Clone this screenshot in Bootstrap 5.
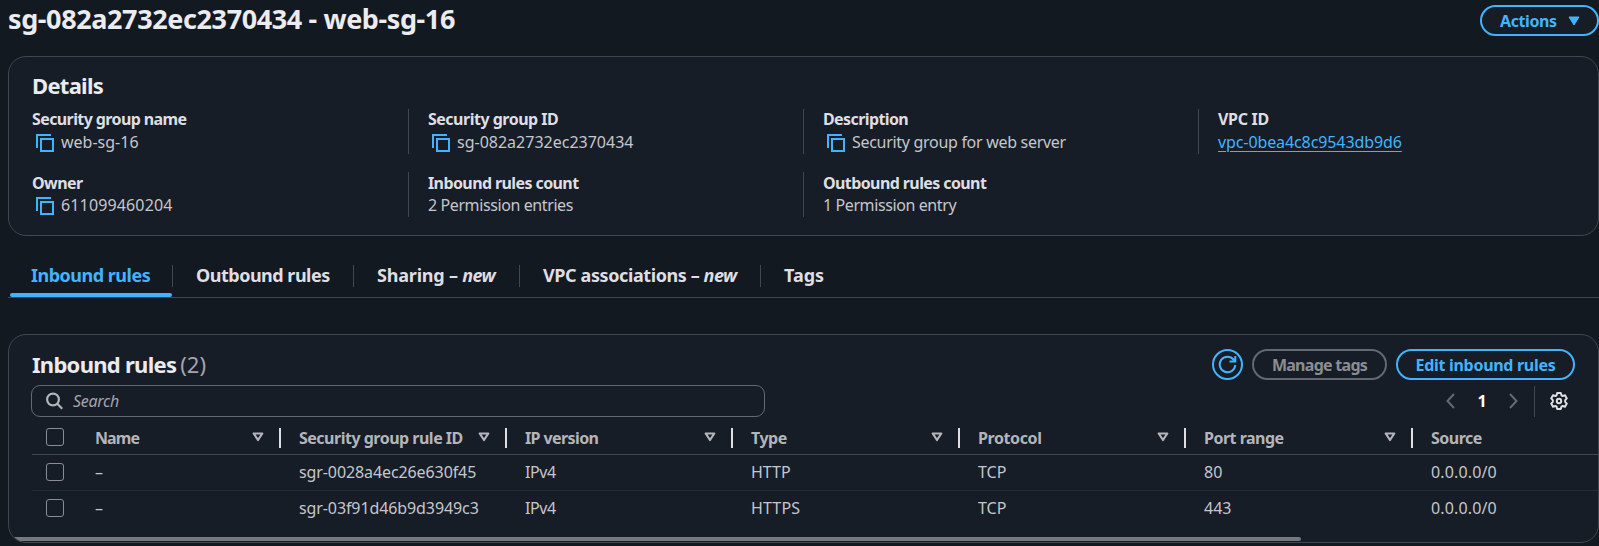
<!DOCTYPE html>
<html lang="en" data-bs-theme="dark">
<head>
<meta charset="utf-8">
<meta name="viewport" content="width=device-width, initial-scale=1">
<title>sg-082a2732ec2370434 - web-sg-16</title>
<link href="https://cdn.jsdelivr.net/npm/bootstrap@5.3.0/dist/css/bootstrap.min.css" rel="stylesheet">
<style>
  :root { --accent: #42b4ff; --edge: #424650; --panel: #161d26; }
  body { background: #131920; color: #c6c6cd; font: 400 16px/20px "Noto Sans", sans-serif; height: 546px; overflow: hidden; }
  svg { display: block; flex: none; }
  .t1 { letter-spacing: -.1px; } .t2 { letter-spacing: -.2px; } .t3 { letter-spacing: -.3px; }
  .t4 { letter-spacing: -.4px; } .t5 { letter-spacing: -.5px; } .t6 { letter-spacing: -.6px; }
  .t7 { letter-spacing: -.72px; } .t9 { letter-spacing: -.9px; } .w1 { letter-spacing: .14px; }
  .page-head { height: 56px; padding-left: 8px; }
  .page-head h1 { font-size: 27px; line-height: 38px; font-weight: 700; letter-spacing: -.39px; color: #ebebf0; }
  .pill { height: 31px; border: 2px solid var(--accent); border-radius: 16px; color: var(--accent); background: var(--panel); font: 700 16px/26px "Noto Sans", sans-serif; padding: 0; }
  .pill.dim { border-color: #656871; color: #8c8c94; }
  .pill.menu { width: 119px; margin-top: 5px; padding: 0 17px 0 18px; }
  .pill.round { width: 31px; }
  .panel { background: var(--panel); border: 1px solid var(--edge); border-radius: 18px; margin-left: 8px; }
  .panel h2 { font-size: 22px; line-height: 26px; font-weight: 700; color: #ebebf0; }
  .details { height: 180px; padding: 15px 0 0 23px; }
  .kv-grid { display: grid; grid-template-columns: 396px 395px 395px 1fr; grid-template-rows: 45px 45px; row-gap: 18px; margin-top: 11px; }
  .kv { position: relative; }
  .kv.line::before { content: ""; position: absolute; left: -20px; top: 0; bottom: 0; width: 1px; background: var(--edge); }
  .kv dt { font-weight: 700; color: #dedee3; line-height: 20px; height: 23px; }
  .kv dd { height: 22px; line-height: 20px; margin: 0; display: flex; }
  .kv.low dt { padding-top: 1px; }
  .kv dd svg { margin: 2px 7px 0 4px; }
  .kv a { color: var(--accent); text-decoration: underline; text-underline-offset: 3px; text-decoration-thickness: 1px; }
  .tabs { margin-left: 8px; height: 43px; margin-top: 19px; border-bottom: 1px solid var(--edge); padding-left: 2px; }
  .tabs .nav-link { height: 42px; padding: 8px 0 0 23px; position: relative; font: 700 18px/24px "Noto Sans", sans-serif; color: #dedee3; white-space: nowrap; }
  .tabs .nav-link:not(.last)::after { content: ""; position: absolute; right: 0; top: 10px; width: 1px; height: 22px; background: var(--edge); }
  .tabs .nav-link.active { color: var(--accent); padding-left: 21px; }
  .tabs .nav-link.active::before { content: ""; position: absolute; left: 0; right: 1px; bottom: 0; height: 4px; border-radius: 2px; background: var(--accent); }
  .rules { height: 209px; margin-top: 36px; overflow: hidden; position: relative; }
  .rules-head { height: 50px; padding: 14px 23px 0 23px; }
  .count { font-weight: 400; color: #a4a4ad; letter-spacing: 0; margin-left: -1px; }
  .searchbox { width: 734px; height: 32px; border: 1px solid #656871; border-radius: 9px; padding-left: 14px; margin-left: 22px; color: #a4a4ad; font-style: italic; }
  .tools { height: 32px; color: #656871; padding-right: 30px; }
  .tools b { width: 54px; }
  .tools i { width: 1px; height: 31px; margin: 0 15px 0 16px; background: var(--edge); }
  .rules-table { table-layout: fixed; width: 1640px; margin: 5px 0 0 23px; border-collapse: separate; border-spacing: 0; }
  .rules-table th { height: 33px; padding: 0; border-bottom: 1px solid var(--edge); color: #b4b4bb; font-weight: 700; vertical-align: top; }
  .rules-table td { height: 36px; padding: 0 0 2px 18px; border-bottom: 1px solid #232b37; vertical-align: middle; }
  .rules-table tr:last-child td { border-bottom: 0; height: 34px; padding-bottom: 1px; }
  .th-row { height: 20px; margin-top: 6px; padding-left: 18px; line-height: 21px; white-space: nowrap; }
  .sep { width: 2px; height: 20px; background: #dedee3; margin-left: 15px; }
  .box { width: 18px; height: 18px; border: 1px solid #8c8c94; border-radius: 3px; flex: none; }
  .rules-table td.pick, .rules-table th .box { padding-left: 14px; }
  .rules-table th .box { padding: 0; margin-left: 14px; }
  .scroll-thumb { position: absolute; left: 0; bottom: 1px; width: 1292px; height: 4px; background: #75787c; border-radius: 0 2px 2px 0; }
</style>
</head>
<body>
<svg width="0" height="0" class="position-absolute">
  <symbol id="copy" viewBox="0 0 18 18"><path d="M1 14V1h14M6 5h11v12H5V5z" fill="none" stroke="#42b4ff" stroke-width="2"/></symbol>
  <symbol id="sort" viewBox="0 0 12 10"><path d="M1.700 1.500h8.600L6 8z" fill="none" stroke="#b4b4bb" stroke-width="2.200" stroke-linejoin="round"/></symbol>
</svg>

<header class="page-head d-flex justify-content-between">
  <h1 class="m-0">sg-082a2732ec2370434 - web-sg-16</h1>
  <button class="btn pill menu d-flex align-items-center justify-content-between t4"><span>Actions</span><svg width="12" height="10" viewBox="0 0 12 10"><path d="M1 1h10L6 9z" fill="#42b4ff" stroke="#42b4ff" stroke-linejoin="round"/></svg></button>
</header>

<section class="panel details">
  <h2 class="m-0 t7">Details</h2>
  <dl class="kv-grid mb-0">
    <div class="kv"><dt class="t6">Security group name</dt><dd><svg width="18" height="18"><use href="#copy"/></svg>web-sg-16</dd></div>
    <div class="kv line"><dt class="t5">Security group ID</dt><dd><svg width="18" height="18"><use href="#copy"/></svg>sg-082a2732ec2370434</dd></div>
    <div class="kv line"><dt class="t6">Description</dt><dd class="t3"><svg width="18" height="18"><use href="#copy"/></svg>Security group for web server</dd></div>
    <div class="kv line"><dt class="t3">VPC ID</dt><dd class="t1"><a href="#">vpc-0bea4c8c9543db9d6</a></dd></div>
    <div class="kv low"><dt class="t6">Owner</dt><dd class="w1"><svg width="18" height="18"><use href="#copy"/></svg>611099460204</dd></div>
    <div class="kv low line"><dt class="t6">Inbound rules count</dt><dd class="t4">2 Permission entries</dd></div>
    <div class="kv low line"><dt class="t6">Outbound rules count</dt><dd class="t4">1 Permission entry</dd></div>
  </dl>
</section>

<nav class="nav tabs flex-nowrap">
  <a class="nav-link active t5" style="width:163px" href="#">Inbound rules</a>
  <a class="nav-link t5" style="width:181px" href="#">Outbound rules</a>
  <a class="nav-link t2" style="width:166px" href="#">Sharing – <em class="t6">new</em></a>
  <a class="nav-link t4" style="width:241px" href="#">VPC associations – <em class="t6">new</em></a>
  <a class="nav-link last" href="#">Tags</a>
</nav>

<section class="panel rules">
  <div class="rules-head d-flex align-items-start">
    <h2 class="mb-0 mt-0 pt-0 me-auto t7"><span class="d-block pt-0" style="margin-top:2px">Inbound rules <span class="count">(2)</span></span></h2>
    <button class="btn pill round d-flex align-items-center justify-content-center" style="margin-right:9px" aria-label="Refresh"><svg width="19" height="19" viewBox="0 0 19 19"><path d="M17.300 10.200A7.800 7.800 0 1 1 15.600 4.600L17 6.100M17.300 1v5.600h-5.800" fill="none" stroke="#42b4ff" stroke-width="2"/></svg></button>
    <button class="btn pill dim t7" style="width:135px;margin-right:9px">Manage tags</button>
    <button class="btn pill t3" style="width:179px">Edit inbound rules</button>
  </div>
  <div class="d-flex justify-content-between">
    <div class="searchbox d-flex align-items-center"><svg width="18" height="18" viewBox="0 0 18 18" style="margin-right:9px"><circle cx="7" cy="7.500" r="5.900" fill="none" stroke="#b4b4bb" stroke-width="2.200"/><path d="M11.300 11.800l4.900 4.900" stroke="#b4b4bb" stroke-width="2.200"/></svg><span class="t3 lh-1">Search</span></div>
    <div class="tools d-flex align-items-center">
      <svg width="9" height="16" viewBox="0 0 9 16"><path d="M8 1L1.500 8 8 15" fill="none" stroke="#656871" stroke-width="2"/></svg>
      <b class="text-white text-center">1</b>
      <svg width="9" height="16" viewBox="0 0 9 16"><path d="M1 1l6.500 7L1 15" fill="none" stroke="#656871" stroke-width="2"/></svg>
      <i></i>
      <svg width="18" height="18" viewBox="0 0 18 18" fill="none" stroke="#dedee3" stroke-width="2" stroke-linejoin="round"><path d="M7.200 1h3.600l.6 2.300 1.300.7 2.300-.7 1.800 3.100-1.600 1.700v1.800l1.600 1.700-1.800 3.100-2.300-.7-1.300.7-.6 2.300H7.200l-.6-2.300-1.300-.7-2.300.7-1.800-3.100 1.600-1.700V8.100L1.200 6.400 3 3.300l2.300.7 1.300-.7z"/><circle cx="9" cy="9" r="2.200"/></svg>
    </div>
  </div>
  <table class="rules-table">
    <colgroup><col style="width:45px"><col style="width:204px"><col style="width:226px"><col style="width:226px"><col style="width:227px"><col style="width:226px"><col style="width:227px"><col></colgroup>
    <thead><tr>
      <th><div class="th-row d-flex justify-content-between ps-0"><span class="box"></span><span class="sep" style="background:#424650"></span></div></th>
      <th><div class="th-row d-flex"><span class="me-auto t9">Name</span><svg class="mt-1" width="12" height="10"><use href="#sort"/></svg><span class="sep"></span></div></th>
      <th><div class="th-row d-flex"><span class="me-auto t5">Security group rule ID</span><svg class="mt-1" width="12" height="10"><use href="#sort"/></svg><span class="sep"></span></div></th>
      <th><div class="th-row d-flex"><span class="me-auto t6">IP version</span><svg class="mt-1" width="12" height="10"><use href="#sort"/></svg><span class="sep"></span></div></th>
      <th><div class="th-row d-flex"><span class="me-auto t5">Type</span><svg class="mt-1" width="12" height="10"><use href="#sort"/></svg><span class="sep"></span></div></th>
      <th><div class="th-row d-flex"><span class="me-auto t4">Protocol</span><svg class="mt-1" width="12" height="10"><use href="#sort"/></svg><span class="sep"></span></div></th>
      <th><div class="th-row d-flex"><span class="me-auto t5">Port range</span><svg class="mt-1" width="12" height="10"><use href="#sort"/></svg><span class="sep"></span></div></th>
      <th><div class="th-row d-flex"><span class="t5">Source</span></div></th>
    </tr></thead>
    <tbody>
      <tr><td class="pick"><div class="box"></div></td><td>–</td><td class="t1">sgr-0028a4ec26e630f45</td><td class="t4">IPv4</td><td>HTTP</td><td>TCP</td><td>80</td><td class="w1">0.0.0.0/0</td></tr>
      <tr><td class="pick"><div class="box"></div></td><td>–</td><td class="t1">sgr-03f91d46b9d3949c3</td><td class="t4">IPv4</td><td class="w1">HTTPS</td><td>TCP</td><td>443</td><td class="w1">0.0.0.0/0</td></tr>
    </tbody>
  </table>
  <div class="scroll-thumb"></div>
</section>
<script src="https://cdn.jsdelivr.net/npm/bootstrap@5.3.0/dist/js/bootstrap.bundle.min.js"></script>
</body>
</html>
